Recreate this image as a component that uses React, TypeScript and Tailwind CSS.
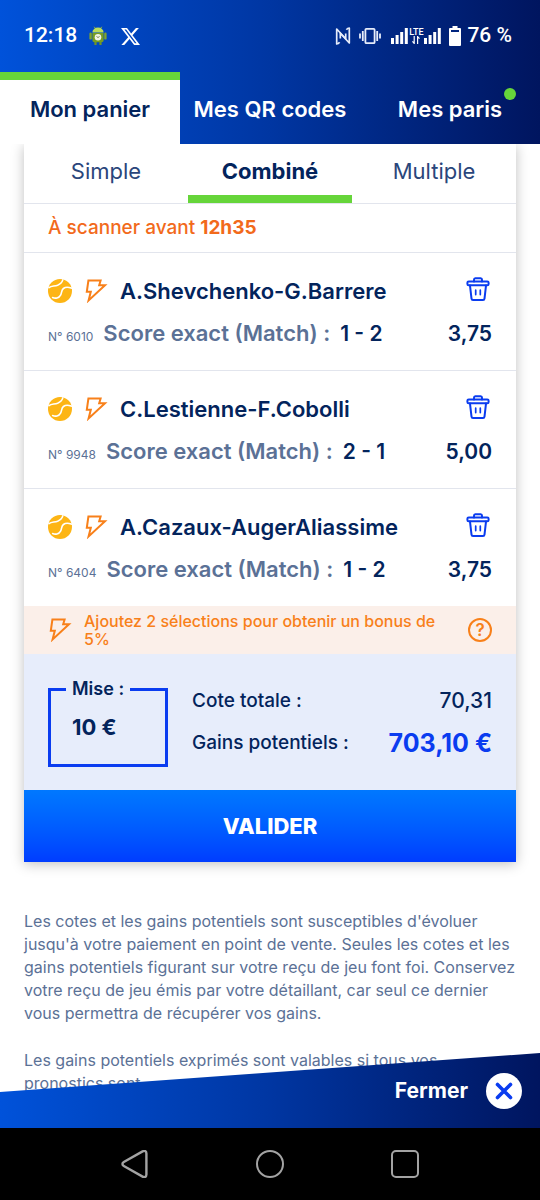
import React, { useState } from "react";
import { BsTwitterX } from "react-icons/bs";

type Bet = {
  id: string;
  title: string;
  score: string;
  odds: string;
};

const initialBets: Bet[] = [
  { id: "6010", title: "A.Shevchenko-G.Barrere", score: "1 - 2", odds: "3,75" },
  { id: "9948", title: "C.Lestienne-F.Cobolli", score: "2 - 1", odds: "5,00" },
  { id: "6404", title: "A.Cazaux-AugerAliassime", score: "1 - 2", odds: "3,75" },
];

const mainTabs = ["Mon panier", "Mes QR codes", "Mes paris"];
const betModes = ["Simple", "Combiné", "Multiple"];

const BoltIcon = () => (
  <svg viewBox="0 0 24 24" className="size-6 shrink-0" fill="none" stroke="#f8801a" strokeWidth="2">
    <path d="M4.400 1.600H16.600l-1.400 4.600h5.800L4.600 21.400 6.800 12.800H2.800Z" />
  </svg>
);

const TennisIcon = () => (
  <svg viewBox="0 0 24 24" className="size-6 shrink-0" fill="none">
    <circle cx="12" cy="12" r="12" fill="#fdb515" />
    <g stroke="#fff" strokeWidth="1.6" strokeLinecap="round">
      <path d="M1 8.600C3.500 6.800 6.500 7.400 9.600 6.200 12.400 5 14.200 3.200 14.800.9" />
      <path d="M4.600 18.500c2.600 1.200 6.400.8 8-2.300 1.300-2.500.6-5 2.800-6.700 2-1.500 5-1.500 7.800-.4" />
    </g>
  </svg>
);

const TrashIcon = () => (
  <svg viewBox="0 0 24 24" className="size-6" fill="none" stroke="#0a3cf0" strokeWidth="2" strokeLinecap="round" strokeLinejoin="round">
    <path d="M8 4.400V2.800c0-.9.5-1.500 1.300-1.500h5.400c.8 0 1.300.6 1.300 1.500v1.600" />
    <rect x="1.400" y="4.400" width="21.200" height="3.800" rx="1.300" />
    <path d="m4 8.600 1.500 13c.1.900.7 1.300 1.500 1.300h10c.8 0 1.400-.4 1.500-1.300l1.500-13" />
    <path d="M9.700 13.200v4.400M14.300 13.200v4.400" strokeWidth="1.700" />
  </svg>
);

const AndroidIcon = () => (
  <svg viewBox="0 0 18 20" className="h-5 w-[18px]">
    <path d="M5.2.8 7 3.4M12.8.8 11 3.4" stroke="#8fb53a" strokeWidth="1" />
    <path d="M3.4 6.5a5.6 5 0 0 1 11.2 0Z" fill="#b9dc5a" />
    <path d="M3.4 7h11.2v7.2a2 2 0 0 1-2 2H5.4a2 2 0 0 1-2-2Z" fill="#759d22" />
    <rect x=".4" y="6.6" width="2.4" height="7" rx="1.2" fill="#7fa32d" />
    <rect x="15.2" y="6.6" width="2.4" height="7" rx="1.2" fill="#7fa32d" />
    <path d="M6.5 16v3M11.5 16v3" stroke="#6f9526" strokeWidth="2.2" />
    <circle cx="9" cy="11.3" r="3.3" fill="#f2f4e4" />
    <path d="m7.5 10.5 1.5 1 1.6-1" fill="none" stroke="#6d7f44" strokeWidth=".9" />
  </svg>
);

const NfcIcon = () => (
  <svg viewBox="0 0 16 20" className="h-5 w-4" fill="none" stroke="#e6ecfa" strokeWidth="1.700" strokeLinejoin="round">
    <path d="M4.600 16.200C3.600 17.600 2.600 18 1.700 18V3l9 9.800V7.600" />
    <path d="M11.400 3.800c1-1.400 2-1.800 2.900-1.800v15l-9-9.800v5.200" />
  </svg>
);

const VibrateIcon = () => (
  <svg viewBox="0 0 22 18" className="h-[18px] w-[22px]" fill="none" stroke="#e6ecfa" strokeWidth="1.800">
    <rect x="6.4" y="1.8" width="9.200" height="14.4" rx="1" />
    <path d="M3.800 4v10M18.200 4v10M1 6.500v5M21 6.500v5" />
  </svg>
);

const bars = [6, 9, 12, 16];

const SignalIcon = () => (
  <svg viewBox="0 0 17 16" className="h-4 w-[17px]" fill="#fff">
    {bars.map((h, i) => (
      <rect key={i} x={i * 4.6} y={16 - h} width="3" height={h} />
    ))}
  </svg>
);

const StatusBar = () => (
  <div className="flex h-[72px] items-center justify-between pr-7 pl-6 font-['Roboto',sans-serif] text-[21px] font-medium">
    <div className="flex items-center gap-3">
      <span>12:18</span>
      <AndroidIcon />
      <BsTwitterX className="ml-0.5 size-[19px]" />
    </div>
    <div className="flex items-center">
      <NfcIcon />
      <span className="ml-2">
        <VibrateIcon />
      </span>
      <span className="ml-2.5 flex items-center">
        <SignalIcon />
        <span className="flex w-4 flex-col items-center">
          <span className="text-[9px] leading-[8px]">LTE</span>
          <svg viewBox="0 0 8 8" className="size-2" fill="none" stroke="#fff" strokeWidth="1.2">
            <path d="M2.2 0v7.4L.4 5.4M5.6 8V.6l1.9 2" />
          </svg>
        </span>
        <SignalIcon />
      </span>
      <svg viewBox="0 0 12 20" className="ml-2 h-5 w-3" fill="#fff">
        <path d="M3.5 0h5v2H11a1 1 0 0 1 1 1v16a1 1 0 0 1-1 1H1a1 1 0 0 1-1-1V3a1 1 0 0 1 1-1h2.500Z" />
        <path d="M2 4h8v2H2Z" fill="#00247f" />
      </svg>
      <span className="ml-1.5">76 %</span>
    </div>
  </div>
);

const App: React.FC = () => {
  const [tab, setTab] = useState(0);
  const [mode, setMode] = useState(1);
  const [bets, setBets] = useState(initialBets);
  const [stake, setStake] = useState("10 €");

  const removeBet = (id: string) => {
    setBets((prev) => prev.filter((b) => b.id !== id));
  };

  return (
    <div className="min-h-screen bg-white font-['Inter',sans-serif] text-[#03245c]">
      <header className="sticky top-0 z-10 bg-linear-to-r from-[#0052da] via-[#0036a2] to-[#00155f] text-white">
        <StatusBar />
        <nav className="grid h-[72px] grid-cols-3">
          {mainTabs.map((label, i) => (
            <button
              key={label}
              onClick={() => setTab(i)}
              className={`relative border-t-8 pb-1.5 text-[22px] font-semibold whitespace-nowrap ${
                i === tab ? "border-[#66d53a] bg-white text-[#03245c]" : "border-transparent"
              }`}
            >
              {label}
              {i === 2 && <span className="absolute top-2 right-6 size-3 rounded-full bg-[#66d53a]" />}
            </button>
          ))}
        </nav>
      </header>

      <main className="px-6 pb-24">
        <section className="bg-white shadow-[0_2px_12px_rgba(0,0,0,0.25)]">
          <div className="grid h-[60px] grid-cols-3 border-b border-[#e2e5ed]">
            {betModes.map((label, i) => (
              <button
                key={label}
                onClick={() => setMode(i)}
                className={`border-b-8 pt-1 text-[22px] ${
                  i === mode ? "border-[#66d53a] font-bold" : "border-transparent text-[#2a467b]"
                }`}
              >
                {label}
              </button>
            ))}
          </div>

          <p className="border-b border-[#e2e5ed] px-6 py-3 text-[19px] leading-6 font-medium text-[#f26a1b]">
            À scanner avant <strong className="font-bold">12h35</strong>
          </p>

          <ul className="divide-y divide-[#e2e5ed]">
            {bets.map((bet) => (
              <li key={bet.id} className="px-6 pt-6 pb-[23px]">
                <div className="mb-3.5 flex h-7 items-center">
                  <TennisIcon />
                  <span className="ml-3">
                    <BoltIcon />
                  </span>
                  <h2 className="ml-3 flex-1 text-[22px] font-semibold">{bet.title}</h2>
                  <button
                    aria-label={`Supprimer ${bet.title}`}
                    onClick={() => removeBet(bet.id)}
                    className="flex h-7 w-7 items-start justify-center"
                  >
                    <TrashIcon />
                  </button>
                </div>
                <div className="flex h-7 items-baseline text-[21px] leading-7 font-semibold">
                  <span className="text-[12px] leading-none font-normal text-[#5b7196]">N° {bet.id}</span>
                  <span className="ml-2.5 text-[22px] text-[#5b7196]">Score exact (Match) :</span>
                  <span className="ml-2.5">{bet.score}</span>
                  <span className="ml-auto">{bet.odds}</span>
                </div>
              </li>
            ))}
          </ul>

          <div className="flex items-center bg-[#fbefe9] px-6 py-1.5 text-[#f8801a]">
            <BoltIcon />
            <p className="mr-6 ml-3 flex-1 text-[16px] leading-[18px] font-medium">
              Ajoutez 2 sélections pour obtenir un bonus de 5%
            </p>
            <button aria-label="Aide" className="size-6 rounded-full border-2 border-[#f8801a] text-[17px] leading-5 font-semibold">
              ?
            </button>
          </div>

          <div className="flex items-center gap-6 bg-[#e7edfb] px-6 pt-[23px] pb-[23px]">
            <fieldset className="h-[90px] w-[120px] border-[3px] border-[#0a3cf0] pl-[15px]">
              <legend className="px-1.5 text-[18px] leading-6 font-semibold">
                <label htmlFor="stake">Mise :</label>
              </legend>
              <input
                id="stake"
                value={stake}
                onChange={(e) => setStake(e.target.value)}
                className="mt-3 ml-1.5 block w-20 bg-transparent text-[22px] leading-7 font-bold outline-none"
              />
            </fieldset>
            <dl className="grid flex-1 grid-cols-[auto_1fr] items-center gap-y-3.5 text-[19px] leading-7 font-medium">
              <dt>Cote totale :</dt>
              <dd className="text-right text-[21px]">70,31</dd>
              <dt>Gains potentiels :</dt>
              <dd className="text-right text-[25px] font-bold text-[#0a3cf0]">703,10 €</dd>
            </dl>
          </div>

          <button className="h-[72px] w-full bg-linear-to-b from-[#0078ff] to-[#003cff] text-[22px] font-extrabold text-white">
            VALIDER
          </button>
        </section>

        <div className="mt-12 space-y-6 text-[16px] leading-[23px] text-[#5b7196]">
          <p>
            Les cotes et les gains potentiels sont susceptibles d'évoluer jusqu'à votre paiement en point de vente.
            Seules les cotes et les gains potentiels figurant sur votre reçu de jeu font foi. Conservez votre reçu de
            jeu émis par votre détaillant, car seul ce dernier vous permettra de récupérer vos gains.
          </p>
          <p>Les gains potentiels exprimés sont valables si tous vos pronostics sont</p>
        </div>
      </main>

      <footer className="fixed inset-x-0 bottom-0 z-10">
        <div className="flex h-[75px] items-center justify-end bg-linear-to-r from-[#0052da] via-[#0036a2] to-[#00155f] pr-[18px] [clip-path:polygon(0_52%,100%_0,100%_100%,0_100%)]">
          <button className="flex items-center gap-[18px] text-[21px] font-bold text-white">
            Fermer
            <span className="flex size-9 items-center justify-center rounded-full bg-white">
              <svg viewBox="0 0 18 18" className="size-[18px]" stroke="#0a3cf0" strokeWidth="3.600" strokeLinecap="round">
                <path d="m2.500 2.500 13 13M15.500 2.500l-13 13" />
              </svg>
            </span>
          </button>
        </div>
        <nav className="bg-black">
          <div className="mx-auto grid h-[72px] w-3/4 grid-cols-3 place-items-center">
            <button aria-label="Retour">
              <svg viewBox="0 0 28 28" className="size-7" fill="none" stroke="#a3a3a3" strokeWidth="2.400" strokeLinejoin="round">
                <path d="M2.800 12 21.600 1.400c2-1.100 3.800-.2 3.800 2v21.200c0 2.200-1.800 3.100-3.800 2L2.800 16c-1.800-1-1.800-3 0-4Z" />
              </svg>
            </button>
            <button aria-label="Accueil" className="size-7 rounded-full border-2 border-[#a3a3a3]" />
            <button aria-label="Applications" className="size-7 rounded-[5px] border-2 border-[#a3a3a3]" />
          </div>
        </nav>
      </footer>
    </div>
  );
};

export default App;
